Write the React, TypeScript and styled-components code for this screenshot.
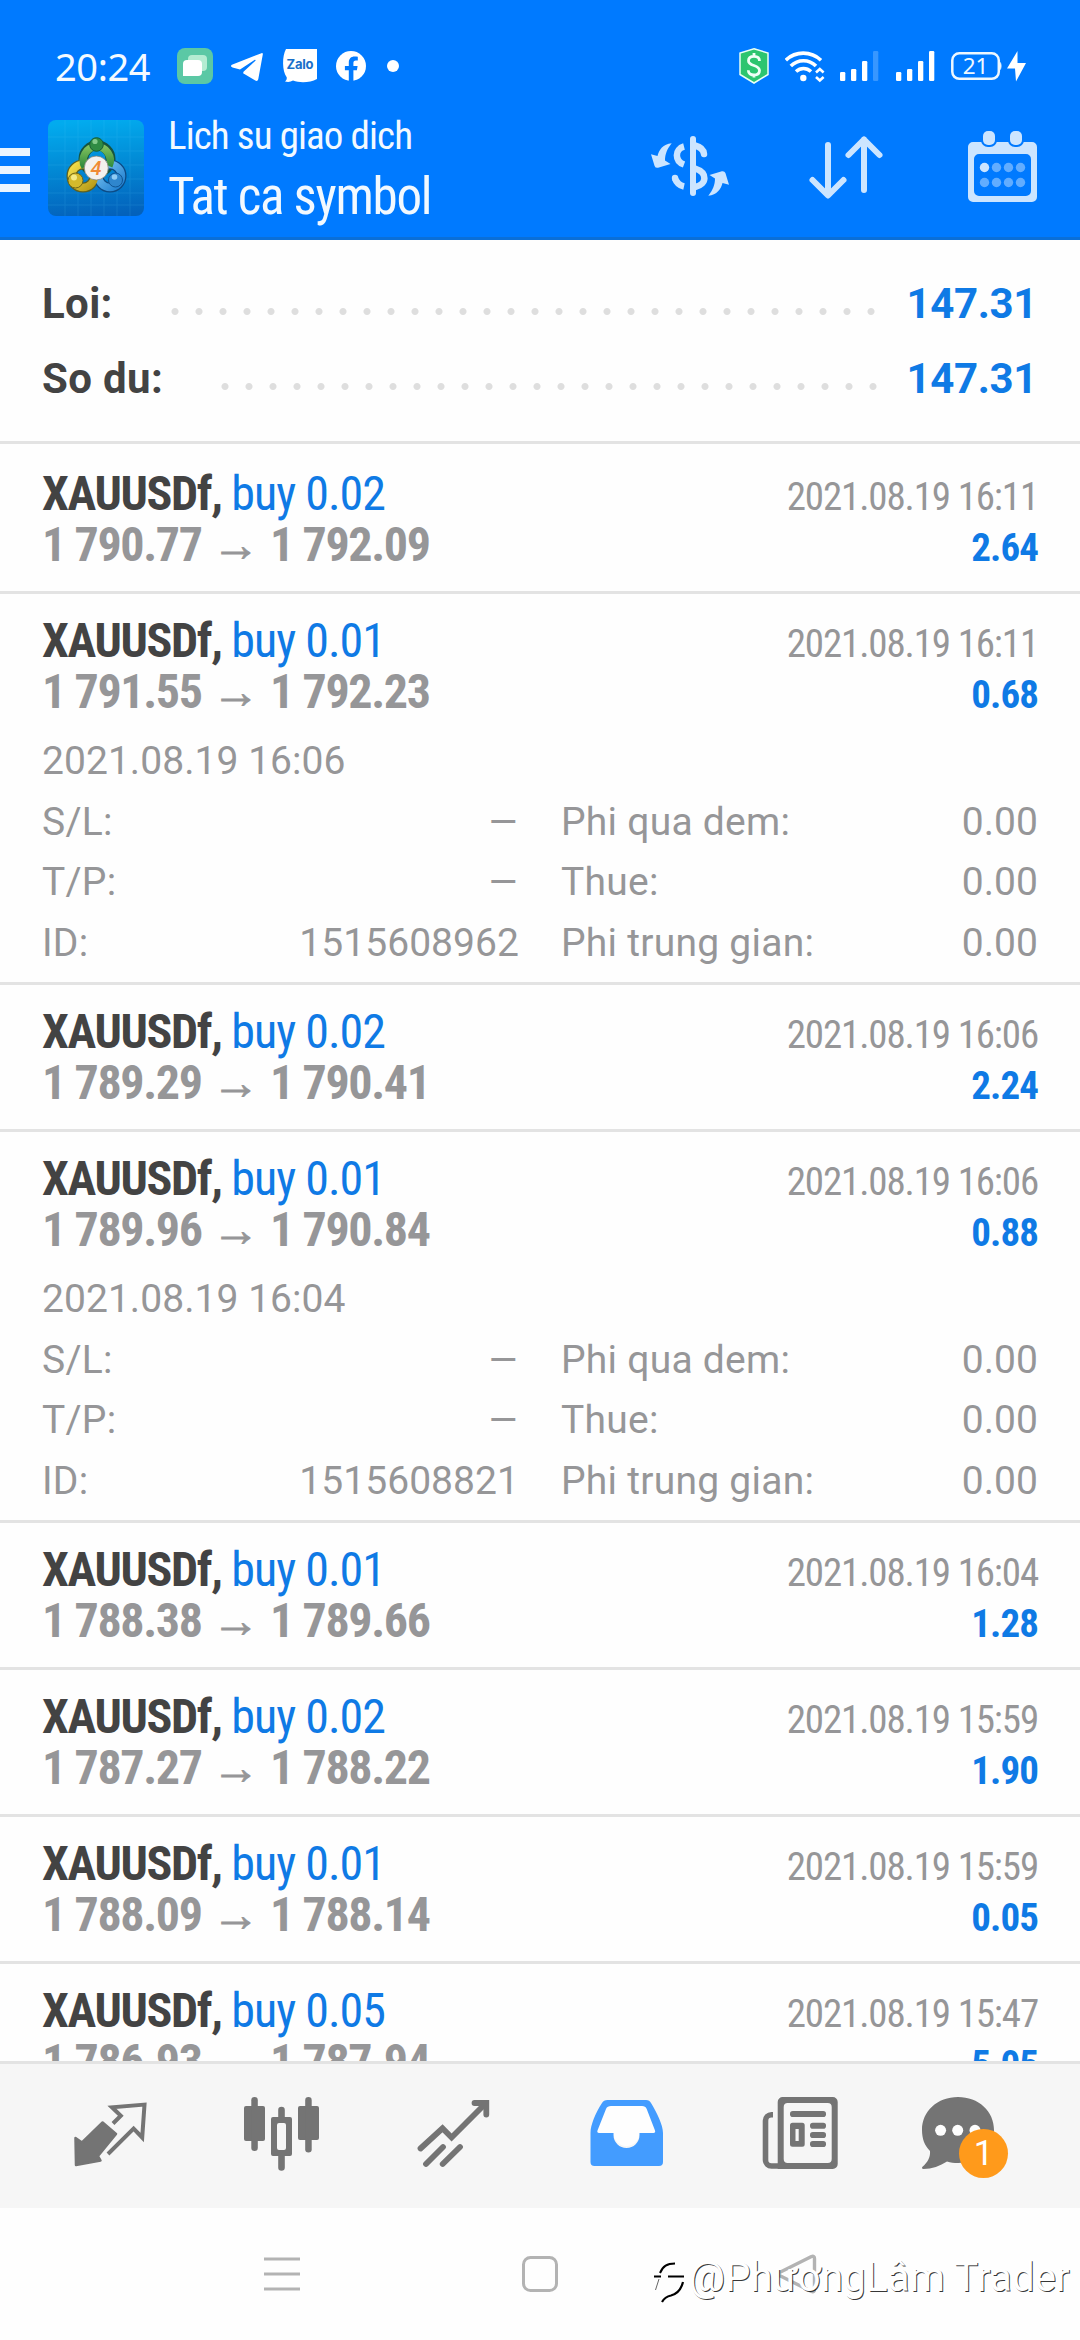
import React from "react";
import styled, { createGlobalStyle } from "styled-components";

const ROBOTO = `Roboto, "Liberation Sans", sans-serif`;
const CONDENSED = `"Roboto Condensed", Roboto, "Liberation Sans", sans-serif`;

const colors = {
  header: "#007aff",
  link: "#0f7ae5",
  text: "#434343",
  muted: "#969698",
  line: "#e3e3e3",
  tint: "#cce5ff",
  tab: "#747474",
};

const GlobalStyle = createGlobalStyle`
  * { box-sizing: border-box; }
  body { margin: 0; background: #fefefe; font-family: ${ROBOTO}; }
  svg { display: block; flex: none; }
`;

const Screen = styled.div`
  position: relative;
  width: 1080px;
  height: 2340px;
  display: flex;
  flex-direction: column;
  overflow: hidden;
  background: #fefefe;
`;

/* ---------- header ---------- */

const Header = styled.header`
  flex: none;
  height: 240px;
  background: ${colors.header};
  border-bottom: 3px solid #0a6fd8;
`;

const StatusBar = styled.div`
  height: 99px;
  padding: 33px 54px 0 55px;
  display: flex;
  justify-content: space-between;
  align-items: center;
`;

const StatusGroup = styled.div<{ $gap: number }>`
  display: flex;
  align-items: center;
  gap: ${(p) => p.$gap}px;
`;

const Clock = styled.span`
  width: 106px;
  font: 400 38px/52px "Noto Sans", sans-serif;
  letter-spacing: -0.4px;
  color: #f4faff;
`;

const Toolbar = styled.div`
  height: 138px;
  display: flex;
  align-items: center;
`;

const MenuButton = styled.button`
  width: 48px;
  padding: 4px 0 0;
  border: 0;
  background: none;
  display: flex;
  flex-direction: column;
  gap: 10px;
`;

const MenuLine = styled.span`
  width: 30px;
  height: 8px;
  background: #eaf5ff;
`;

const Heading = styled.div`
  flex: 1;
  padding: 3px 0 0 24px;
  display: flex;
  flex-direction: column;
  gap: 8px;
  font-family: ${CONDENSED};
  color: #f2f9ff;
`;

const Subtitle = styled.div`
  font-size: 39px;
  line-height: 46px;
  letter-spacing: -0.9px;
`;

const Title = styled.div`
  font-size: 51px;
  line-height: 60px;
  letter-spacing: -1.3px;
`;

const ToolButton = styled.button`
  width: 156px;
  height: 138px;
  padding: 0;
  border: 0;
  background: none;
  color: ${colors.tint};
  display: flex;
  align-items: center;
  justify-content: center;
`;

/* ---------- account summary ---------- */

const Summary = styled.section`
  flex: none;
  height: 204px;
  padding: 26px 43px 0 42px;
  border-bottom: 3px solid ${colors.line};
`;

const SummaryRow = styled.div`
  display: flex;
  font-size: 42px;
  line-height: 75px;
  font-weight: 700;
`;

const SummaryLabel = styled.span`
  letter-spacing: 0.35px;
  color: ${colors.text};
`;

const Dots = styled.span`
  flex: 1;
  height: 9px;
  margin: 41px 20px 0 50px;
  background: radial-gradient(circle at center, #dedede 0 3px, transparent 4px) 0 0 / 24px 9px repeat-x;
`;

const SummaryValue = styled.span`
  letter-spacing: -0.35px;
  color: ${colors.link};
`;

/* ---------- deals ---------- */

const DealList = styled.main`
  flex: 1;
  min-height: 0;
  padding-top: 3px;
  overflow: hidden;
`;

const Deal = styled.article`
  border-bottom: 3px solid ${colors.line};
`;

const DealHead = styled.div`
  height: 144px;
  padding: 21px 42px 0 42px;
  font-family: ${CONDENSED};
`;

const DealLine = styled.div`
  height: 51px;
  display: flex;
  justify-content: space-between;
  align-items: baseline;
`;

const Symbol = styled.span`
  font-size: 48px;
  line-height: 51px;
  font-weight: 700;
  letter-spacing: -1.35px;
  color: ${colors.text};
`;

const Side = styled.span`
  font-weight: 400;
  letter-spacing: -1px;
  color: ${colors.link};
`;

const Prices = styled.span`
  font-size: 48px;
  line-height: 51px;
  font-weight: 700;
  letter-spacing: -1.37px;
  color: ${colors.muted};
`;

const Arrow = styled.span`
  margin: 0 0.5px;
  font-weight: 400;
  letter-spacing: 0;
  -webkit-text-stroke: 0.8px ${colors.muted};
`;

const CloseTime = styled.time`
  font-size: 39px;
  line-height: 45px;
  letter-spacing: -1.15px;
  color: ${colors.muted};
`;

const Profit = styled.span`
  font-size: 39px;
  line-height: 45px;
  font-weight: 700;
  letter-spacing: -0.95px;
  color: ${colors.link};
`;

const DealDetails = styled.div`
  height: 244px;
  margin-top: -7px;
  margin-bottom: 7px;
  padding: 0 42px;
  font-size: 39px;
  line-height: 60.7px;
  letter-spacing: 0.05px;
  color: ${colors.muted};
`;

const DetailGrid = styled.div`
  display: grid;
  grid-template-columns: 1fr 1fr;
  column-gap: 42px;
`;

const Detail = styled.div`
  display: flex;
  justify-content: space-between;
`;

const DetailLabel = styled.span`
  letter-spacing: 0.25px;
`;

const EmptyValue = styled.span`
  display: inline-block;
  transform: translateX(1px) scaleX(1.25);
  transform-origin: right center;
`;

/* ---------- bottom bars ---------- */

const TabBar = styled.nav`
  flex: none;
  height: 147px;
  padding: 15px 24px 0;
  border-top: 3px solid ${colors.line};
  background: #f6f6f6;
  display: grid;
  grid-template-columns: repeat(6, 172px);
`;

const Tab = styled.button<{ $active?: boolean }>`
  position: relative;
  height: 108px;
  padding: 0;
  border: 0;
  background: none;
  color: ${(p) => (p.$active ? "#439cff" : colors.tab)};
  display: flex;
  justify-content: center;
`;

const Badge = styled.span`
  position: absolute;
  left: 75px;
  top: 50px;
  width: 49px;
  height: 49px;
  border-radius: 50%;
  background: #ff9a1b;
  color: #fff;
  font: 400 35px/49px ${ROBOTO};
  text-align: center;
`;

const SystemNav = styled.div`
  flex: none;
  height: 132px;
  padding: 0 153px;
  display: grid;
  grid-template-columns: repeat(3, 258px);
  align-items: center;
  justify-items: center;
  color: #b3b3b3;
`;

const Watermark = styled.div`
  position: absolute;
  left: 652px;
  top: 2250px;
  display: flex;
  gap: 3px;
  font: 400 40px/56px ${ROBOTO};
  letter-spacing: 0.22px;
  white-space: nowrap;
  color: #fff;
  text-shadow: 1px 1px 0 rgba(0, 0, 0, 0.8);
`;

/* ---------- status icons ---------- */

const ChatAppIcon = () => (
  <svg width="36" height="36" viewBox="0 0 36 36">
    <rect width="36" height="36" rx="8" fill="#5bc8a5" />
    <rect x="11" y="7" width="19" height="16" rx="4" fill="#b4ecd2" />
    <path d="M10 12h11a4 4 0 0 1 4 4v8a4 4 0 0 1-4 4H6V16a4 4 0 0 1 4-4z" fill="#fff" />
  </svg>
);

const TelegramIcon = () => (
  <svg width="36" height="36" viewBox="0 0 36 36" fill="#fff">
    <path d="M32.5 5.2 3.5 16.5c-2 .8-2 2.3 0 2.9l7.5 2.2L25.5 12c.8-.5 1.5.2.9.8L14.5 23.8l-.4 1.5L26.3 32.5c1.5.9 2.6.3 3-1.5L33.8 6.500c.2-1.200-.4-1.700-1.300-1.300z" />
  </svg>
);

const ZaloIcon = () => (
  <svg width="36" height="36" viewBox="0 0 36 36">
    <path d="M5 1h31v30c-7 3.800-17 4.200-24 1.600-2.500 1.400-5 1.700-8 .9 1.600-1.500 2-2.800 1.700-4.300C1 23 1 8 5 1z" fill="#fff" />
    <text x="19" y="21" textAnchor="middle" textLength="27" fontFamily="Inter, sans-serif" fontWeight="700" fontSize="13" fill="#1a6fc9">Zalo</text>
  </svg>
);

const FacebookIcon = () => (
  <svg width="36" height="36" viewBox="0 0 36 36">
    <circle cx="18" cy="18" r="15" fill="#fff" />
    <path d="M15.800 33V22.200h-3.900v-4.300h3.900v-3.400c0-3.900 2.300-6 5.800-6 1.200 0 2.200.1 3.200.3v3.700h-1.900c-1.900 0-2.500 1.100-2.500 2.400v3h4.200l-.7 4.300h-3.500V33z" fill={colors.header} />
  </svg>
);

const DotIcon = () => (
  <svg width="16" height="16" viewBox="0 0 16 16">
    <circle cx="8" cy="8" r="6" fill="#fff" />
  </svg>
);

const ShieldIcon = () => (
  <svg width="30" height="36" viewBox="0 0 30 36">
    <path d="M15 .8 29 5v21.500L15 35 1 26.500V5z" fill="#2cc56f" stroke="#e8fff5" strokeWidth="1.5" />
    <path d="M20.500 13c0-3-2.200-4.600-5.500-4.600S9.500 10 9.500 12.700c0 6 11 3.600 11 9.800 0 2.900-2.300 4.500-5.500 4.500s-5.700-1.700-5.700-4.700M15 5v4M15 26.500v3" fill="none" stroke="#effff6" strokeWidth="2.8" />
  </svg>
);

const WifiIcon = () => (
  <svg width="40" height="36" viewBox="0 0 40 36" fill="none" stroke="#fff" strokeWidth="3.6">
    <path d="M.8 12.200C10.500 2.800 26 2.800 36 12.200" />
    <path d="M5.800 18c7.300-7 18-7 25.200 0" />
    <path d="M11 23.500c4.500-4 10.500-4 15 0" />
    <circle cx="18.300" cy="30" r="3.200" fill="#fff" stroke="none" />
    <path d="m31 24.500 3.800-3.500 3.800 3.500M31 29l3.800 3.500 3.800-3.500" strokeWidth="2.6" />
  </svg>
);

const SignalIcon = ({ weak }: { weak?: boolean }) => (
  <svg width="40" height="36" viewBox="0 0 40 36" fill="#fff">
    <rect x="0" y="24" width="5.300" height="9" rx="1.200" />
    <rect x="11" y="21" width="5.300" height="12" rx="1.200" />
    <rect x="22" y="13" width="5.300" height="20" rx="1.200" />
    <rect x="33" y="3" width="5.300" height="30" rx="1.200" opacity={weak ? 0.22 : 1} />
  </svg>
);

const BatteryIcon = () => (
  <svg width="75" height="36" viewBox="0 0 75 36">
    <rect x="1.300" y="5.300" width="46.500" height="25.500" rx="7" fill="none" stroke="#eef8ff" strokeWidth="2.5" />
    <path d="M48.500 14c2 .5 2 7.500 0 8z" fill="#eef8ff" stroke="#eef8ff" />
    <text x="24.500" y="26" textAnchor="middle" fontFamily="Noto Sans, sans-serif" fontSize="22.500" fill="#eef8ff">21</text>
    <path d="M66.500 3 56 20.500h8L65 33.500 75 15h-8.500z" fill="#fff" />
  </svg>
);

/* ---------- toolbar icons ---------- */

const AppLogo = () => (
  <svg width="96" height="96" viewBox="0 0 96 96">
    <defs>
      <linearGradient id="logoBg" x1="0.5" y1="0" x2="0.6" y2="1">
        <stop offset="0" stopColor="#02abee" />
        <stop offset="0.45" stopColor="#028bd6" />
        <stop offset="1" stopColor="#0361bb" />
      </linearGradient>
      <linearGradient id="logoGreen" x1="0" y1="0" x2="0" y2="1">
        <stop offset="0" stopColor="#7fc05d" />
        <stop offset="1" stopColor="#2f8a3c" />
      </linearGradient>
      <linearGradient id="logoYellow" x1="0" y1="0" x2="1" y2="1">
        <stop offset="0" stopColor="#f3df4a" />
        <stop offset="1" stopColor="#b79a18" />
      </linearGradient>
      <linearGradient id="logoBlue" x1="0" y1="0" x2="1" y2="1">
        <stop offset="0" stopColor="#7cc4f2" />
        <stop offset="1" stopColor="#1f7fd0" />
      </linearGradient>
    </defs>
    <rect width="96" height="96" rx="8" fill="url(#logoBg)" />
    <path d="M17 0v96M30 0v96M43 0v96M56 0v96M69 0v96M82 0v96M0 17h96M0 31h96M0 45h96M0 59h96M0 73h96M0 85h96" stroke="#5cd0ff" strokeWidth="1" opacity="0.14" />
    <g fill="none" strokeWidth="10" stroke="#17543f">
      <circle cx="49" cy="39" r="13.500" />
      <circle cx="35" cy="56" r="11.500" stroke="#5d6121" />
      <circle cx="62" cy="56" r="11.500" stroke="#0c4a84" />
    </g>
    <g fill="none" strokeWidth="7.5">
      <circle cx="62" cy="56" r="11.500" stroke="url(#logoBlue)" />
      <circle cx="35" cy="56" r="11.500" stroke="url(#logoYellow)" />
      <path d="M37 47a13.500 13.500 0 1 1 24-1" stroke="url(#logoGreen)" />
    </g>
    <circle cx="48.500" cy="24.500" r="6.800" fill="#2f8b43" stroke="#175c35" />
    <circle cx="47" cy="21.500" r="2.600" fill="#82c98a" />
    <circle cx="27.500" cy="60.500" r="7.500" fill="#d3b92c" stroke="#6e6518" />
    <circle cx="26" cy="57.500" r="3" fill="#f4ea86" />
    <circle cx="67.500" cy="60" r="7" fill="#2f86cd" stroke="#0f5493" />
    <circle cx="66.500" cy="57" r="2.800" fill="#8fcbf4" />
    <circle cx="48.300" cy="48" r="12" fill="#f4f1ee" stroke="#7d8178" strokeWidth="0.8" />
    <text x="48" y="54.800" textAnchor="middle" fontFamily="Roboto, sans-serif" fontStyle="italic" fontWeight="500" fontSize="20" fill="#f08a35">4</text>
  </svg>
);

const CurrencyIcon = () => {
  const arrow = "M29.700 23.300C21 24 17 30 15.500 36L9 34.300 12.600 46q.8 2.200 3.500 1.800L28.500 44 23 40.500c0-6 2-11.500 6.700-17.200z";
  return (
    <svg width="96" height="96" viewBox="0 0 96 96" fill="none" stroke="currentColor" strokeWidth="6.5">
      <path d="M51 19v54" strokeWidth="6" strokeLinecap="round" />
      <path d="M53 25.500C59 27 61.500 29.500 62 34" strokeLinecap="round" />
      <path d="M53 48.500c12.500 4 12.500 15.500 0 18.500" />
      <path d="M42 26.500c-9.500 2.500-9.500 14.500 0 18" />
      <path d="M33 58.500c1.500 4 4.500 7 9 8" />
      <circle cx="33" cy="58" r="3.200" fill="currentColor" stroke="none" />
      <path d={arrow} fill="currentColor" stroke="none" />
      <path d={arrow} fill="currentColor" stroke="none" transform="rotate(180 48 49.5)" />
    </svg>
  );
};

const SortIcon = () => (
  <svg width="96" height="96" viewBox="0 0 96 96" fill="none" stroke="currentColor" strokeWidth="6" strokeLinecap="round" strokeLinejoin="round">
    <path d="M30 25v50M14.500 60 30 75.500 45.500 60" />
    <path d="M66 70V19.500M50.500 35 66 19.500 81.500 35" />
  </svg>
);

const CalendarIcon = () => (
  <svg width="96" height="96" viewBox="0 0 96 96" fill="currentColor">
    <path fillRule="evenodd" d="M19 22h59a5 5 0 0 1 5 5v50a5 5 0 0 1-5 5H19a5 5 0 0 1-5-5V27a5 5 0 0 1 5-5zM25 34a5 5 0 0 0-5 5v32a5 5 0 0 0 5 5h47a5 5 0 0 0 5-5V39a5 5 0 0 0-5-5z" />
    <g stroke={colors.header} strokeWidth="4" paintOrder="stroke">
      <rect x="29" y="11" width="12" height="14" rx="5" />
      <rect x="56" y="11" width="12" height="14" rx="5" />
    </g>
    <circle cx="30.500" cy="47.500" r="4.700" />
    <g opacity="0.48">
      {[42.5, 54.5, 66.5].map((x) => <circle key={x} cx={x} cy="47.500" r="4.700" />)}
      {[30.5, 42.5, 54.5, 66.5].map((x) => <circle key={x} cx={x} cy="62.500" r="4.700" />)}
    </g>
  </svg>
);

/* ---------- tab icons ---------- */

const QuotesIcon = () => (
  <svg width="108" height="108" viewBox="0 0 108 108">
    <path d="M19.500 59 26 63.500 46.600 43.500 60 55 42 77 44.500 81.500 20 86z" fill="currentColor" stroke="currentColor" strokeWidth="2.5" strokeLinejoin="round" />
    <path d="M57 44.500 64.800 36.700 56 28.300 88.500 25.600 86.200 58.500 77.600 49.500 52 75" fill="none" stroke="currentColor" strokeWidth="4" />
  </svg>
);

const ChartIcon = () => (
  <svg width="108" height="108" viewBox="0 0 108 108" fill="currentColor">
    <rect x="16" y="27" width="21" height="35" rx="2" />
    <rect x="23.300" y="18" width="6.500" height="54" rx="3.200" />
    <path fillRule="evenodd" d="M45 38h17a2 2 0 0 1 2 2v35a2 2 0 0 1-2 2H45a2 2 0 0 1-2-2V40a2 2 0 0 1 2-2zM51 44a2 2 0 0 0-2 2v23a2 2 0 0 0 2 2h5a2 2 0 0 0 2-2V46a2 2 0 0 0-2-2z" />
    <path d="M50.200 39v-8a3.200 3.200 0 0 1 6.600 0v8zM50.200 76v12.500a3.200 3.200 0 0 0 6.600 0V76z" />
    <rect x="70" y="27" width="21" height="34" rx="2" />
    <rect x="77.200" y="18" width="6.500" height="55.500" rx="3.200" />
  </svg>
);

const TradeIcon = () => (
  <svg width="108" height="108" viewBox="0 0 108 108" fill="none" stroke="currentColor" strokeWidth="5.8" strokeLinecap="round">
    <path d="M20.500 69.500 42.500 49.300 51.600 58.500 85 25" />
    <path d="M74.500 24H86.300V35.500" />
    <path d="M26 85 43 68M42.700 85 60 68" />
  </svg>
);

const HistoryIcon = () => (
  <svg width="108" height="108" viewBox="0 0 108 108">
    <path d="M35 24h40L86 54H67.500a13 13 0 0 1-26 0H23z" fill="#fefefe" />
    <path fill="currentColor" fillRule="evenodd" d="M35.500 21h38.500c2.500 0 4 1.200 5 3C85 34 91 46 91 54v29a4 4 0 0 1-4 4H22.500a4 4 0 0 1-4-4V54c0-8 5-20 11.500-30 1-1.800 3-3 5.500-3zM39 27c-2.500 0-4 .7-5 3l-8.500 21.500c-.6 1.500 0 2.500 1.500 2.500H41.500v2a13 13 0 0 0 26 0v-2H81.500c1.500 0 2-1 1.500-2.500L74.700 30c-1-2.300-2.200-3-4.700-3z" />
  </svg>
);

const NewsIcon = () => (
  <svg width="108" height="108" viewBox="0 0 108 108" fill="currentColor">
    <path fillRule="evenodd" d="M38.700 18h50a5 5 0 0 1 5 5v62a5 5 0 0 1-5 5h-55V23a5 5 0 0 1 5-5zM43.700 24a4 4 0 0 0-4 4v52a4 4 0 0 0 4 4h40a4 4 0 0 0 4-4V28a4 4 0 0 0-4-4z" />
    <path d="M29 35.800h-1.500a6 6 0 0 0-6 6V81a6 6 0 0 0 6 6H36" fill="none" stroke="currentColor" strokeWidth="5.6" />
    <rect x="46" y="32" width="36" height="6" rx="2.800" />
    <path fillRule="evenodd" d="M48.500 43.700h9.700a2.500 2.500 0 0 1 2.500 2.500v19a2.500 2.500 0 0 1-2.500 2.500h-9.700a2.500 2.500 0 0 1-2.500-2.500v-19a2.500 2.500 0 0 1 2.500-2.500zM51.500 50v12h3.200V50z" />
    <rect x="66" y="43.700" width="16" height="6" rx="2.800" />
    <rect x="66" y="53" width="16" height="6" rx="2.800" />
    <rect x="66" y="62" width="16" height="6" rx="2.800" />
  </svg>
);

const MessagesIcon = () => (
  <svg width="108" height="108" viewBox="0 0 108 108" fill="currentColor">
    <path d="M42 18c20.500 0 36 14 36 33S62.500 84 42 84c-4 0-7.500-.5-11-1.500C24 87 16 90 7.500 90 6 90 5.500 88.800 6.500 87.700 12 83 14.500 78 14 72 8.500 66.500 6 59.500 6 51 6 32 21.500 18 42 18z" />
    <g fill="#fefefe">
      <circle cx="24.600" cy="51.300" r="5.500" />
      <circle cx="41.700" cy="51.300" r="5.500" />
      <circle cx="59" cy="51.300" r="5.500" />
    </g>
  </svg>
);

/* ---------- system navigation icons ---------- */

const RecentsIcon = () => (
  <svg width="36" height="36" viewBox="0 0 36 36" stroke="currentColor" strokeWidth="3">
    <path d="M0 3h36M0 18h36M0 33h36" />
  </svg>
);

const HomeIcon = () => (
  <svg width="36" height="36" viewBox="0 0 36 36" fill="none" stroke="currentColor" strokeWidth="3">
    <rect x="1.500" y="1.500" width="33" height="33" rx="7" />
  </svg>
);

const BackIcon = () => (
  <svg width="42" height="42" viewBox="0 0 42 42" fill="none" stroke="currentColor" strokeWidth="3.4" strokeLinejoin="round">
    <path d="M34.500 3.500 3.500 19a2 2 0 0 0 0 4L34.500 38.500c2 .8 3-.2 3-2V5.500c0-1.800-1-2.800-3-2z" />
  </svg>
);

const WatermarkLogo = () => (
  <svg width="34" height="56" viewBox="0 0 34 56" fill="none" stroke="#000">
    <path d="M8 23c3-7 7-9.500 15-9.500" strokeWidth="2" />
    <path d="M2 26.500h7M16 26.500h16" strokeWidth="2" />
    <path d="M31 32c-2 8-6 12-12 13.500-4.500 1-7 3-9 6.500" strokeWidth="2.2" />
    <path d="M3.500 40 7 29" strokeWidth="1" opacity="0.6" />
  </svg>
);

/* ---------- data ---------- */

interface DealInfo {
  volume: string;
  open: string;
  close: string;
  time: string;
  profit: string;
  details?: { opened: string; id: string };
}

const deals: DealInfo[] = [
  { volume: "0.02", open: "1 790.77", close: "1 792.09", time: "2021.08.19 16:11", profit: "2.64" },
  { volume: "0.01", open: "1 791.55", close: "1 792.23", time: "2021.08.19 16:11", profit: "0.68", details: { opened: "2021.08.19 16:06", id: "1515608962" } },
  { volume: "0.02", open: "1 789.29", close: "1 790.41", time: "2021.08.19 16:06", profit: "2.24" },
  { volume: "0.01", open: "1 789.96", close: "1 790.84", time: "2021.08.19 16:06", profit: "0.88", details: { opened: "2021.08.19 16:04", id: "1515608821" } },
  { volume: "0.01", open: "1 788.38", close: "1 789.66", time: "2021.08.19 16:04", profit: "1.28" },
  { volume: "0.02", open: "1 787.27", close: "1 788.22", time: "2021.08.19 15:59", profit: "1.90" },
  { volume: "0.01", open: "1 788.09", close: "1 788.14", time: "2021.08.19 15:59", profit: "0.05" },
  { volume: "0.05", open: "1 786.93", close: "1 787.94", time: "2021.08.19 15:47", profit: "5.05" },
];

const Field = ({ label, value }: { label: string; value?: string }) => (
  <Detail>
    <DetailLabel>{label}</DetailLabel>
    {value ? <span>{value}</span> : <EmptyValue>–</EmptyValue>}
  </Detail>
);

const DealRow = ({ deal }: { deal: DealInfo }) => (
  <Deal>
    <DealHead>
      <DealLine>
        <Symbol>XAUUSDf, <Side>buy {deal.volume}</Side></Symbol>
        <CloseTime>{deal.time}</CloseTime>
      </DealLine>
      <DealLine>
        <Prices>{deal.open} <Arrow>→</Arrow> {deal.close}</Prices>
        <Profit>{deal.profit}</Profit>
      </DealLine>
    </DealHead>
    {deal.details && (
      <DealDetails>
        <div>{deal.details.opened}</div>
        <DetailGrid>
          <Field label="S/L:" />
          <Field label="Phi qua dem:" value="0.00" />
          <Field label="T/P:" />
          <Field label="Thue:" value="0.00" />
          <Field label="ID:" value={deal.details.id} />
          <Field label="Phi trung gian:" value="0.00" />
        </DetailGrid>
      </DealDetails>
    )}
  </Deal>
);

export default function App() {
  return (
    <Screen>
      <GlobalStyle />
      <Header>
        <StatusBar>
          <StatusGroup $gap={16}>
            <Clock>20:24</Clock>
            <ChatAppIcon />
            <TelegramIcon />
            <ZaloIcon />
            <FacebookIcon />
            <DotIcon />
          </StatusGroup>
          <StatusGroup $gap={15.5}>
            <ShieldIcon />
            <WifiIcon />
            <SignalIcon weak />
            <SignalIcon />
            <BatteryIcon />
          </StatusGroup>
        </StatusBar>
        <Toolbar>
          <MenuButton>
            <MenuLine />
            <MenuLine />
            <MenuLine />
          </MenuButton>
          <AppLogo />
          <Heading>
            <Subtitle>Lich su giao dich</Subtitle>
            <Title>Tat ca symbol</Title>
          </Heading>
          <ToolButton><CurrencyIcon /></ToolButton>
          <ToolButton><SortIcon /></ToolButton>
          <ToolButton><CalendarIcon /></ToolButton>
        </Toolbar>
      </Header>
      <Summary>
        <SummaryRow>
          <SummaryLabel>Loi:</SummaryLabel>
          <Dots />
          <SummaryValue>147.31</SummaryValue>
        </SummaryRow>
        <SummaryRow>
          <SummaryLabel>So du:</SummaryLabel>
          <Dots />
          <SummaryValue>147.31</SummaryValue>
        </SummaryRow>
      </Summary>
      <DealList>
        {deals.map((deal) => <DealRow key={deal.open} deal={deal} />)}
      </DealList>
      <TabBar>
        <Tab><QuotesIcon /></Tab>
        <Tab><ChartIcon /></Tab>
        <Tab><TradeIcon /></Tab>
        <Tab $active><HistoryIcon /></Tab>
        <Tab><NewsIcon /></Tab>
        <Tab><MessagesIcon /><Badge>1</Badge></Tab>
      </TabBar>
      <SystemNav>
        <RecentsIcon />
        <HomeIcon />
        <BackIcon />
      </SystemNav>
      <Watermark>
        <WatermarkLogo />
        <span>@PhươngLâm Trader</span>
      </Watermark>
    </Screen>
  );
}
